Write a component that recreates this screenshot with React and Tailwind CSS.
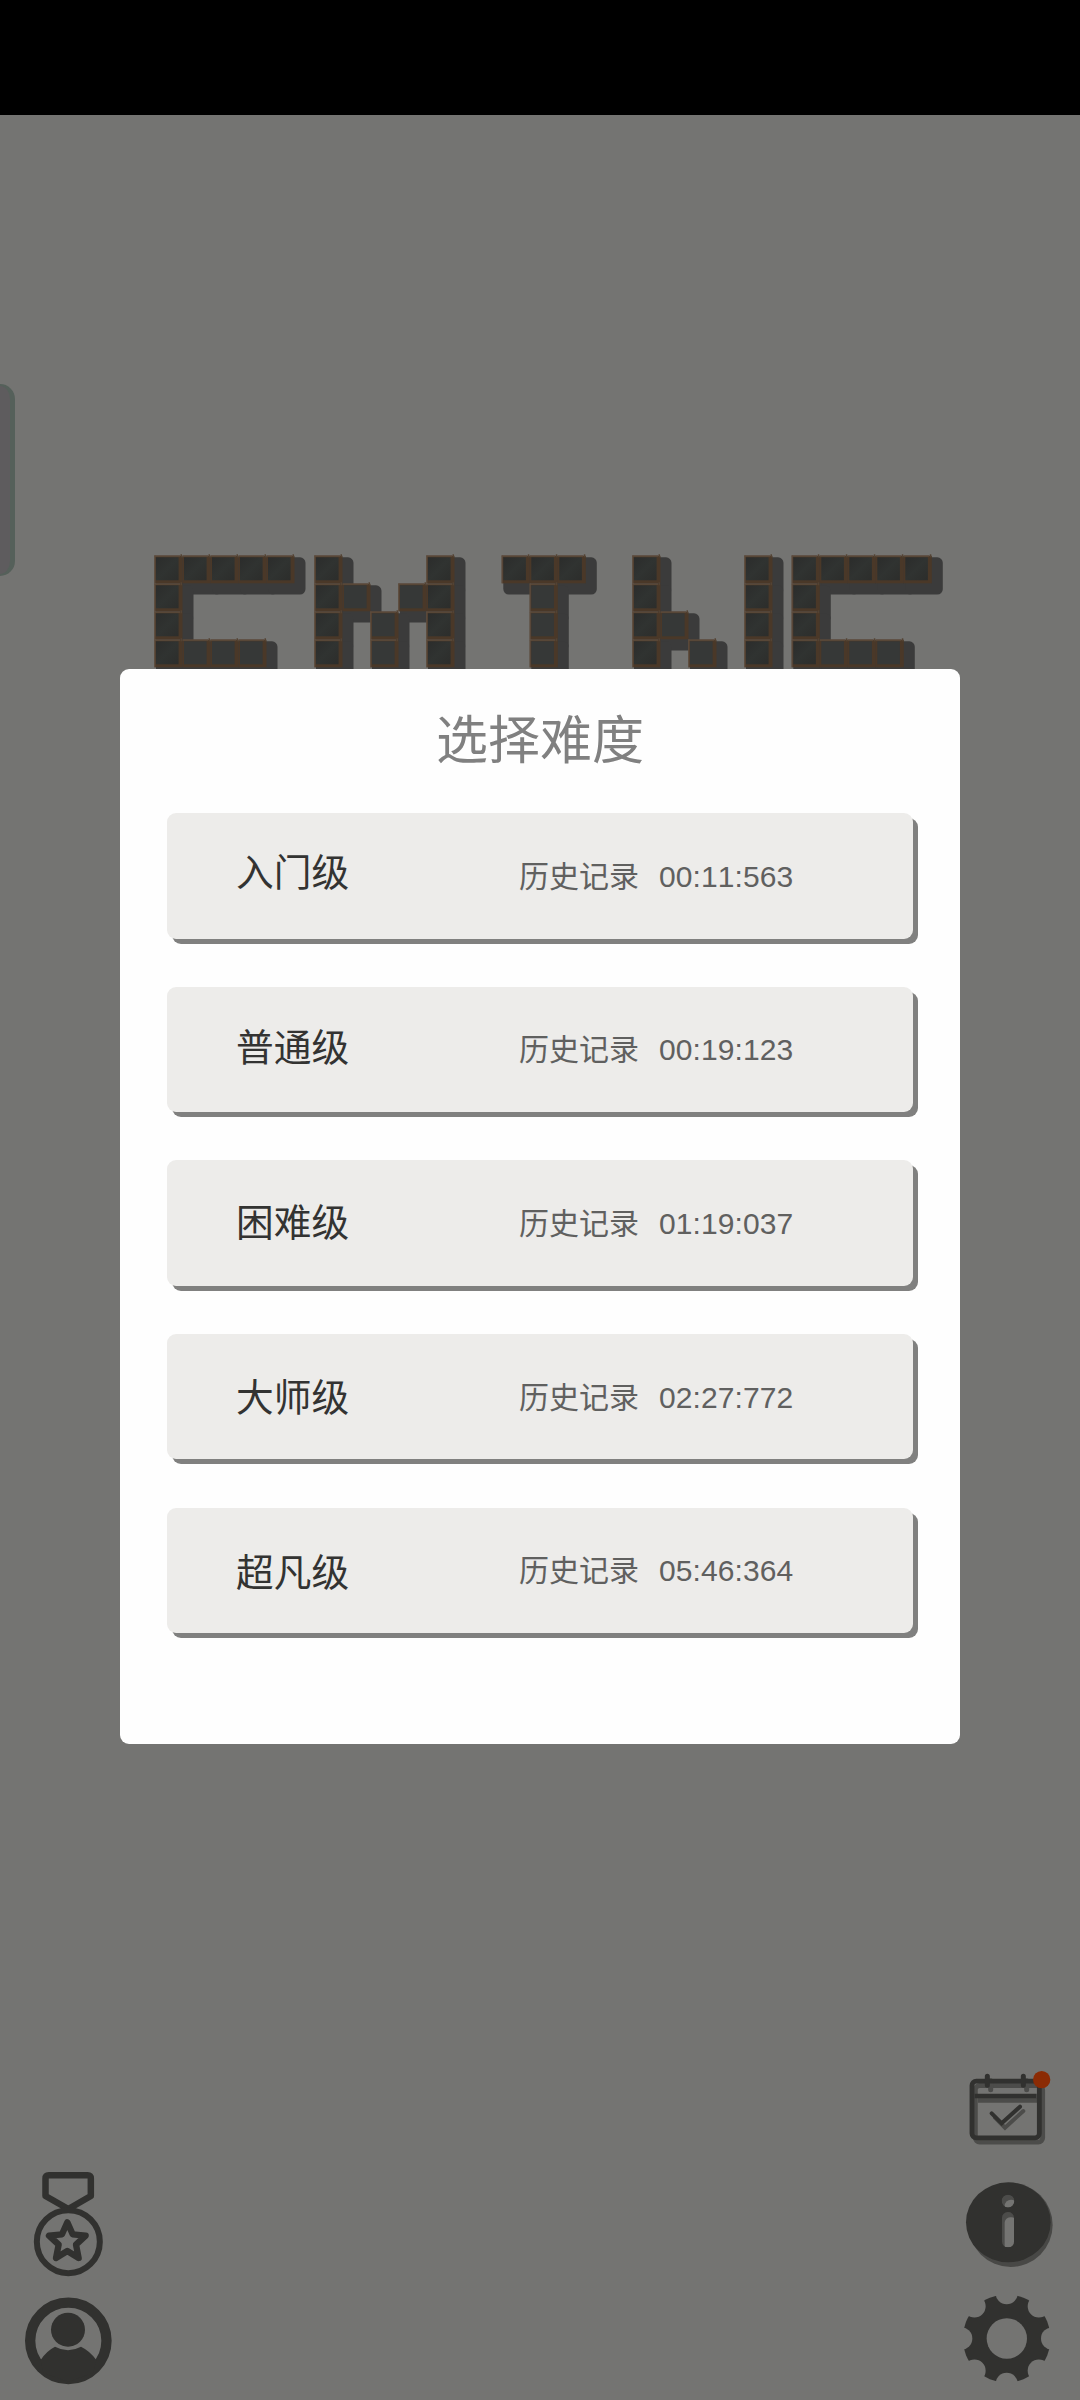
const LEVELS = [
  { name: "入门级", record: "00:11:563", nudge: "-translate-y-[2px]" },
  { name: "普通级", record: "00:19:123", nudge: "-translate-y-[1px]" },
  { name: "困难级", record: "01:19:037", nudge: "translate-y-[1px]" },
  { name: "大师级", record: "02:27:772", nudge: "translate-y-[2px]" },
  { name: "超凡级", record: "05:46:364", nudge: "translate-y-[3px]" },
];

// block logo, one entry per letter: x offset + rows of filled cells
const CELL = 28;
const LETTERS = [
  { x: 0, rows: ["#####", "#", "#", "####"] },
  { x: 160, rows: ["#   #", "## ##", "# # #", "# # #"] },
  { x: 347.3, rows: ["###", " #", " #", " #"] },
  { x: 478, rows: ["#   #", "#   #", "##  #", "# # #"] },
  { x: 637.3, rows: ["#####", "#", "#", "####"] },
];

const BLOCKS = LETTERS.flatMap((l) =>
  l.rows.flatMap((row, r) =>
    [...row]
      .map((c, i) =>
        c === "#"
          ? {
              x: l.x + i * CELL,
              y: r * CELL,
              open: row[i - 1] !== "#",
              inner: i > 0 && i < l.rows[0].length - 1 && r > 0,
            }
          : null
      )
      .filter(Boolean)
  )
);

function Logo() {
  return (
    <svg className="h-[120px] w-[800px]" viewBox="-6 -7.300 800 120">
      <defs>
        <linearGradient id="tile" x1="0" y1="0" x2="1" y2="1">
          <stop offset="0" stopColor="#2b2c2b" />
          <stop offset="0.5" stopColor="#303331" />
          <stop offset="1" stopColor="#2c2d2b" />
        </linearGradient>
      </defs>
      {BLOCKS.map((b, i) => (
        <rect key={i} x={b.x} y={b.y} width="37.5" height="37.3" rx="5.5" fill="#3b3b3b" />
      ))}
      {BLOCKS.map((b, i) => (
        <g key={i}>
          <rect x={b.x - 1.5} y={b.y - 1.5} width="28" height="27.5" fill="#4a3828" />
          <rect x={b.x - 1.5} y={b.y - 2} width="25.5" height="1.5" fill="#5c4b3c" />
          {b.open && <rect x={b.x - 1.8} y={b.y - 2} width="1.2" height="28" fill="#5f4e3f" />}
          <rect x={b.x + 24.5} y={b.y - 3} width="1.5" height="3" fill="#544333" />
          <rect x={b.x} y={b.y} width="22.6" height="23" fill={b.inner ? "#363837" : "url(#tile)"} />
        </g>
      ))}
    </svg>
  );
}

function MedalIcon() {
  return (
    <svg className="h-[108px] w-[72px]" viewBox="96 60 216 324" fill="none" stroke="#31312f" strokeLinejoin="round">
      <path d="M136.500 138V86Q136.500 76 146.500 76H262.500Q272.500 76 272.500 86V138L205 177Z" strokeWidth="19.500" />
      <circle cx="205" cy="275" r="94.500" strokeWidth="18" />
      <path d="M202 217L218 253L257 257L228 284L236 324L202 303L168 324L176 284L147 257L186 253Z" strokeWidth="19" />
    </svg>
  );
}

function UserIcon() {
  return (
    <svg className="h-[89px] w-[89px]" viewBox="72 438 267 267" fill="#31312f">
      <circle cx="205" cy="572.500" r="114.500" fill="none" stroke="#31312f" strokeWidth="31" />
      <circle cx="204" cy="539" r="51" />
      <path d="M122 630Q139 603 165 590Q204 611 243 590Q270 603 289 630L280 668L205 695L130 668Z" />
    </svg>
  );
}

function CalendarShape({ color }) {
  return (
    <g fill="none" stroke={color} strokeLinecap="round">
      <rect x="96" y="93.500" width="202" height="170" rx="13" strokeWidth="14.500" />
      <path d="M104 138H290" strokeWidth="14" strokeLinecap="butt" />
      <path d="M142 79V106M250 79V106" strokeWidth="15" />
      <path d="M155 190L185 220L240 170" strokeWidth="12" />
    </g>
  );
}

function CalendarIcon() {
  return (
    <svg className="h-[78px] w-[84px]" viewBox="84 60 252 234">
      <g transform="translate(10 13)">
        <CalendarShape color="#4c4c4a" />
      </g>
      <CalendarShape color="#31312f" />
      <circle cx="305" cy="89" r="26" fill="#8b2b04" />
    </svg>
  );
}

function InfoIcon() {
  return (
    <svg className="h-[88px] w-[89px]" viewBox="75 60 267 264">
      <clipPath id="info-hole">
        <circle cx="204" cy="123" r="19" />
        <rect x="186" y="156" width="36" height="106" rx="17" />
      </clipPath>
      <circle cx="212" cy="195" r="126" fill="#484846" />
      <ellipse cx="205" cy="187" rx="127" ry="120" fill="#31312f" />
      <g clipPath="url(#info-hole)">
        <rect x="180" y="100" width="50" height="170" fill="#4c4c4a" />
        <circle cx="213" cy="138" r="19" fill="#747472" />
        <rect x="194" y="172" width="36" height="106" rx="16" fill="#747472" />
      </g>
    </svg>
  );
}

function GearIcon() {
  return (
    <svg className="h-[89px] w-[89px]" viewBox="66 402 267 267">
      <mask id="gear">
        <circle cx="200" cy="535.500" r="132" fill="#fff" />
        <circle cx="200.500" cy="535.500" r="60.500" fill="#000" />
        {[0, 45, 90, 135, 180, 225, 270, 315].map((a) => (
          <circle key={a} cx="200" cy="399" r="33.500" fill="#000" transform={`rotate(${a} 200 535.5)`} />
        ))}
      </mask>
      <rect x="66" y="402" width="267" height="267" fill="#31312f" mask="url(#gear)" />
    </svg>
  );
}

function LevelButton({ level }) {
  return (
    <button className="flex h-[125.500px] w-[746px] items-center rounded-[9px] bg-[#edecea] pl-[69px] text-left shadow-[5px_5px_0_#80807f]">
      <span className={"w-[283px] text-[37.700px] leading-none text-[#333332] " + level.nudge}>{level.name}</span>
      <span className="translate-y-[1px] text-[30px] leading-none text-[#60605f]">历史记录</span>
      <span className="ml-[20px] translate-y-[1px] text-[30px] leading-none tracking-[0.100px] text-[#60605f] [font-kerning:none]">
        {level.record}
      </span>
    </button>
  );
}

export default function App() {
  return (
    <div className="relative flex h-[2400px] w-[1080px] flex-col overflow-hidden bg-[#747472] font-['Liberation_Sans','Noto_Sans_CJK_SC',sans-serif]">
      <div className="h-[115px] shrink-0 bg-black" />

      <div className="mt-[269px] h-[192px] w-[15px] shrink-0 rounded-r-[15px] border-y-2 border-r-[5px] border-[#55605a] bg-[#5e5c5e]" />

      <div className="-mt-[26px] ml-[150px]">
        <Logo />
      </div>

      <div className="mt-auto flex items-end justify-between pr-[26px] pb-[15px] pl-[24px]">
        <div className="flex flex-col gap-[18px]">
          <div className="ml-[8px]">
            <MedalIcon />
          </div>
          <UserIcon />
        </div>
        <div className="flex flex-col pb-[2px]">
          <div className="ml-[6px]">
            <CalendarIcon />
          </div>
          <div className="mt-[32px] mb-[26px] ml-[3px]">
            <InfoIcon />
          </div>
          <GearIcon />
        </div>
      </div>

      {/* 难度选择弹窗 */}
      <div className="absolute inset-0 flex items-start justify-center pt-[669px]">
        <div className="flex h-[1075px] w-[840px] flex-col items-center rounded-[9px] bg-[#fefefe]">
          <h1 className="mt-[46px] h-[98px] text-[52px] leading-[52px] text-[#808080]">选择难度</h1>
          <div className="flex flex-col gap-[48.170px]">
            {LEVELS.map((l) => (
              <LevelButton key={l.name} level={l} />
            ))}
          </div>
        </div>
      </div>
    </div>
  );
}
